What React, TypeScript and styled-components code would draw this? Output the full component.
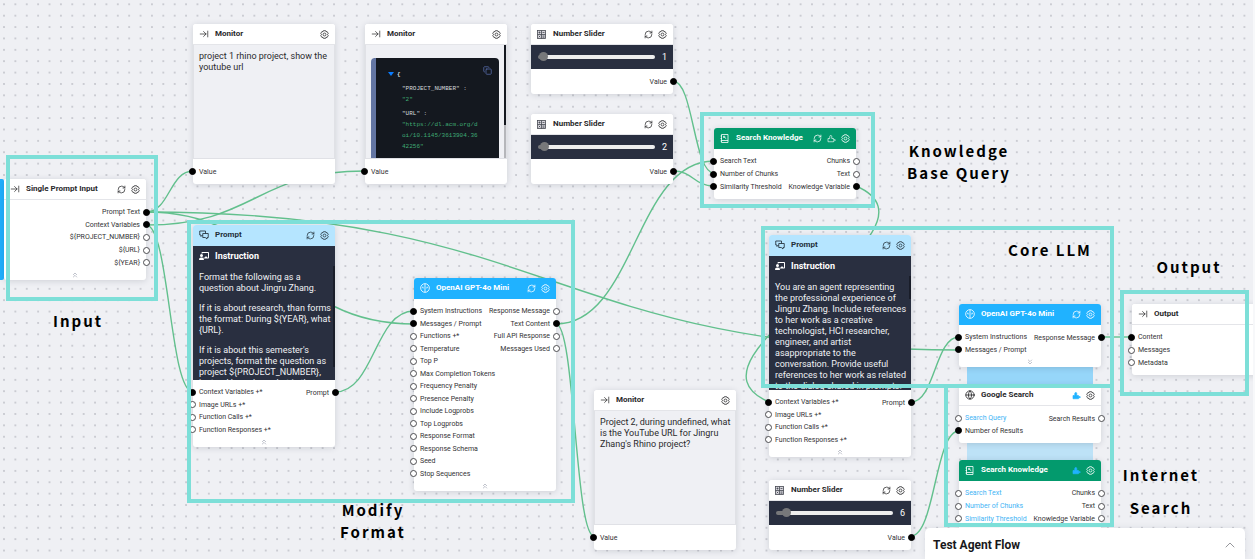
import React from 'react';
import styled, { createGlobalStyle } from 'styled-components';
import { FaChalkboardUser } from 'react-icons/fa6';
import { ArrowRightToLine, ChevronUp, ChevronsDown, ChevronsUp, Copy, Globe, RefreshCw } from 'lucide-react';

const GlobalStyle = createGlobalStyle`
  *, *::before, *::after { box-sizing: border-box; }
  body { margin: 0; background: #f7f8fa; font-family: Roboto, "Liberation Sans", sans-serif; color: #2a2a2c; }
  ul { list-style: none; margin: 0; padding: 0; }
  p, h1, h2, h3 { margin: 0; }
  button { border: 0; padding: 0; background: none; color: inherit; font: inherit; cursor: pointer; }
`;

const Canvas = styled.main`
  position: relative;
  min-height: 100vh;
  margin-right: 2px;
  overflow: hidden;
  background: #eff0f4;
`;

const Layer = styled.svg`
  position: absolute;
  inset: 0;
  width: 100%;
  height: 100%;
`;

const Place = styled.div<{ $x: number; $y: number; $w?: number; $h?: number }>`
  position: absolute;
  left: ${(p) => p.$x}px;
  top: ${(p) => p.$y}px;
  width: ${(p) => p.$w ?? 142}px;
  ${(p) => (p.$h ? `height: ${p.$h}px;` : '')}
`;

const NodeCard = styled(Place)`
  background: #fff;
  border-radius: 3px;
  box-shadow: 0 1px 6px rgba(40, 45, 65, 0.16);
`;

const Frame = styled(Place)`
  border: 4px solid #7ddfd8;
`;

const Caption = styled(Place)`
  font: 700 15px/22px "Noto Sans CJK SC", "Noto Sans", sans-serif;
  letter-spacing: 2px;
  color: #000;
  text-align: center;
  white-space: nowrap;
`;

const ToolLink = styled(Place)<{ $color: string }>`
  background: ${(p) => p.$color};
`;

const AccentBar = styled(Place)`
  background: #1fb0ff;
  border-radius: 0 2px 2px 0;
`;

type Tone = 'white' | 'sky' | 'blue' | 'green';
const tones: Record<Tone, [string, string, string]> = {
  white: ['#fff', '#29292b', '#e4e5e9'],
  sky: ['#b5e5ff', '#23303a', '#b5e5ff'],
  blue: ['#20b2ff', '#fff', '#20b2ff'],
  green: ['#039a6d', '#fff', '#039a6d'],
};

const Header = styled.header<{ $tone: Tone }>`
  display: flex;
  align-items: center;
  height: 21px;
  padding: 0 6px 0 6px;
  border-radius: 3px 3px 0 0;
  background: ${(p) => tones[p.$tone][0]};
  color: ${(p) => tones[p.$tone][1]};
  border-bottom: 1px solid ${(p) => tones[p.$tone][2]};
`;

const Glyph = styled.span`
  display: flex;
  width: 16px;
`;

const Title = styled.h2`
  flex: 1;
  font-size: 8px;
  line-height: 12px;
  font-weight: 700;
  white-space: nowrap;
`;

const Tools = styled.div`
  display: flex;
  gap: 5px;
`;

const Tool = styled.button<{ $color?: string }>`
  display: flex;
  color: ${(p) => p.$color ?? 'inherit'};
`;

const Ports = styled.div<{ $more?: boolean }>`
  display: flex;
  justify-content: space-between;
  padding: 6px 0 ${(p) => (p.$more ? 0 : 6)}px;
`;

const PortList = styled.ul<{ $h: number; $out: boolean }>`
  display: flex;
  flex-direction: column;
  flex-shrink: ${(p) => (p.$out ? 0 : 1)};
  min-width: 0;
  height: ${(p) => p.$h}px;
  margin: ${(p) => (p.$out ? '0 -4px 0 0' : '0 0 0 -4px')};
`;

const PortRow = styled.li<{ $out?: boolean; $blue?: boolean }>`
  flex: 1;
  display: flex;
  flex-direction: ${(p) => (p.$out ? 'row-reverse' : 'row')};
  align-items: center;
  gap: 3px;
  font-size: 7px;
  line-height: 12px;
  white-space: nowrap;
  color: ${(p) => (p.$blue ? '#43b4f5' : '#333335')};
`;

const Dot = styled.span<{ $on?: boolean }>`
  flex: none;
  width: 7px;
  height: 7px;
  border-radius: 50%;
  border: 1px solid ${(p) => (p.$on ? '#000' : '#4c4c50')};
  background: ${(p) => (p.$on ? '#000' : '#fff')};
`;

const Expand = styled.button`
  display: flex;
  align-items: center;
  justify-content: center;
  width: 100%;
  height: 11px;
  color: #a0a5b2;
`;

const Output = styled.div`
  height: 114px;
  padding: 6px 5px;
  overflow: hidden;
  position: relative;
  background: #eff0f4;
  border: solid #e0e1e6;
  border-width: 0 1px 1px;
  font-size: 9px;
  line-height: 11px;
  white-space: nowrap;
`;

const Code = styled.pre`
  position: relative;
  height: 120px;
  margin: 7px 2px 0 0;
  padding: 11px 8px 0 26px;
  border-left: 5px solid #6476a3;
  border-radius: 4px;
  background: #14181f;
  color: #d5d8dc;
  font: 6px/11px "Liberation Mono", monospace;
  em { font-style: normal; color: #3fa974; }
  b { margin-left: -5px; }
  p { padding-bottom: 3px; }
`;

const Caret = styled.i`
  position: absolute;
  left: 12px;
  top: 14px;
  border: 3px solid transparent;
  border-top: 4px solid #0a7cff;
`;

const CopyButton = styled.button`
  position: absolute;
  right: 7px;
  top: 8px;
  color: #5a6fae;
`;

const Thumb = styled.span<{ $y: number; $h: number; $c: string }>`
  position: absolute;
  right: 0;
  top: ${(p) => p.$y}px;
  width: 2px;
  height: ${(p) => p.$h}px;
  background: ${(p) => p.$c};
`;

const Instruction = styled.section`
  position: relative;
  height: 134px;
  padding: 4px 5px 0 6px;
  overflow: hidden;
  background: #292f40;
  color: #fff;
  font-size: 9px;
  line-height: 11px;
  p { margin-bottom: 9px; color: #f0f1f4; white-space: pre; }
`;

const InstructionTitle = styled.h3`
  display: flex;
  align-items: center;
  gap: 6px;
  margin-bottom: 10px;
  font-size: 9px;
  line-height: 12px;
  font-weight: 700;
`;

const SliderBand = styled.label`
  display: flex;
  align-items: center;
  gap: 4px;
  height: 24px;
  padding: 0 6px 0 7px;
  background: #292f40;
  color: #fff;
  font-size: 9px;
  line-height: 12px;
`;

const Range = styled.input`
  flex: 1;
  min-width: 0;
  height: 9px;
  margin: 0;
  appearance: none;
  background: transparent;
  &::-webkit-slider-runnable-track { height: 4px; border-radius: 2px; background: linear-gradient(90deg, #77787a 0 7px, #eeeeee 7px); }
  &::-webkit-slider-thumb { appearance: none; width: 9px; height: 9px; margin-top: -3px; border-radius: 50%; background: #77787a; }
`;

const Value = styled.output`
  width: 8px;
  text-align: right;
`;

const TestPanel = styled.section`
  position: absolute;
  right: 8px;
  bottom: 0;
  display: flex;
  align-items: center;
  justify-content: space-between;
  width: 320px;
  height: 31px;
  padding: 2px 7px 0 8px;
  background: #fff;
  border-radius: 5px 5px 0 0;
  box-shadow: 0 0 6px rgba(40, 45, 65, 0.1);
  h2 { font-size: 12px; line-height: 16px; font-weight: 700; color: #18181b; }
  button { display: flex; color: #96979c; }
`;

const CalcIcon = () => (
  <svg width="9" height="9" viewBox="0 0 18 18" fill="none" stroke="#454952" strokeWidth="1.6">
    <rect x="1" y="1" width="16" height="16" fill="#d9d7de" />
    <path d="M9 1v16M1 9h16M3 5h4M5 3v4M11 5h4M3.5 11.5l3 3M6.5 11.5l-3 3M11 12h4M11 14.5h4" />
  </svg>
);
const BrainIcon = () => (
  <svg width="10" height="10" viewBox="0 0 18 18" fill="none" stroke="currentColor" strokeWidth="1.5">
    <circle cx="9" cy="9" r="7.8" />
    <path d="M9 1.500v15M5 6.500v2.500h1.500M13 6.500v2.500h-1.500" />
  </svg>
);
const ChatIcon = () => (
  <svg width="10" height="10" viewBox="0 0 20 20" fill="none" stroke="currentColor" strokeWidth="1.7" strokeLinejoin="round">
    <path d="M13 7V2H1.500v8H4v3l3-3" />
    <path d="M7.500 7H18.500v8H16v3l-3.500-3h-5z" />
  </svg>
);
const KnowledgeIcon = () => (
  <svg width="9" height="9" viewBox="0 0 18 18" fill="none" stroke="currentColor" strokeWidth="1.600">
    <path d="M3 1h13v16H3zM1 4h3M1 9h3M1 14h3M3 13h13" />
    <path d="M7 4.500h2.500v2.500H7zM9.500 7l3 2.500" />
  </svg>
);
const GearIcon = () => (
  <svg width="9" height="9" viewBox="0 0 20 20" fill="none" stroke="currentColor" strokeWidth="1.700" strokeLinejoin="round">
    <path d="M7.500 1.500h5l.8 2.400 2.400-.500 2.600 4.300L16.700 10l1.600 2.300-2.600 4.300-2.400-.500-.8 2.400h-5l-.8-2.400-2.400.500-2.600-4.300L3.300 10 1.700 7.700l2.600-4.300 2.400.500z" />
    <circle cx="10" cy="10" r="3.200" />
  </svg>
);
const PlugIcon = ({ filled }: { filled?: boolean }) => (
  <svg width="9" height="9" viewBox="0 0 18 18" fill={filled ? 'currentColor' : 'none'} stroke="currentColor" strokeWidth="1.300" strokeLinejoin="round">
    <path d="M2 15.500V9h3.500V5a2 2 0 0 1 4 0v4H13v2h2.500a1.200 1.200 0 0 1 0 2.400H13v2.100z" />
  </svg>
);
const icons = {
  arrow: <ArrowRightToLine size={10} strokeWidth={1.75} />,
  calc: <CalcIcon />,
  chat: <ChatIcon />,
  brain: <BrainIcon />,
  book: <KnowledgeIcon />,
  globe: <Globe size={10} strokeWidth={2} />,
};

type NodeProps = {
  x: number; y: number; title: string; icon: keyof typeof icons; tone?: Tone;
  refresh?: boolean; plug?: 'on' | 'off'; settings?: boolean;
  ins?: string[]; outs?: string[]; on?: string[]; linked?: string[];
  more?: 'up' | 'down'; children?: React.ReactNode;
};

function FlowNode({ x, y, title, icon, tone = 'white', refresh, plug, settings = true, ins = [], outs = [], on = [], linked = [], more, children }: NodeProps) {
  const column = (names: string[], out: boolean) => (
    <PortList $h={Math.round(names.length * 12.5)} $out={out}>
      {names.map((n) => (
        <PortRow key={n} $out={out} $blue={linked.includes(n)}>
          <Dot $on={on.includes(n)} />
          <span>{n}</span>
        </PortRow>
      ))}
    </PortList>
  );
  return (
    <NodeCard as="article" $x={x} $y={y}>
      <Header $tone={tone}>
        <Glyph>{icons[icon]}</Glyph>
        <Title>{title}</Title>
        <Tools>
          {refresh && <Tool aria-label="Refresh"><RefreshCw size={9} strokeWidth={2} /></Tool>}
          {plug && <Tool aria-label="Tool link" $color={plug === 'on' ? '#20b2ff' : undefined}><PlugIcon filled={plug === 'on'} /></Tool>}
          {settings && <Tool aria-label="Settings"><GearIcon /></Tool>}
        </Tools>
      </Header>
      {children}
      <Ports $more={!!more}>
        {column(ins, false)}
        {column(outs, true)}
      </Ports>
      {more && (
        <Expand aria-label={more === 'up' ? 'Collapse' : 'Expand'}>
          {more === 'up' ? <ChevronsUp size={8} /> : <ChevronsDown size={8} />}
        </Expand>
      )}
    </NodeCard>
  );
}

function Slider({ x, y, value }: { x: number; y: number; value: number }) {
  return (
    <FlowNode x={x} y={y} title="Number Slider" icon="calc" refresh outs={['Value']} on={['Value']}>
      <SliderBand>
        <Range type="range" min={0} max={100} defaultValue={value} aria-label="Number" />
        <Value>{value}</Value>
      </SliderBand>
    </FlowNode>
  );
}

const promptIns = ['Context Variables +*', 'Image URLs +*', 'Function Calls +*', 'Function Responses +*'];

function Prompt({ x, y, paragraphs, thumb }: { x: number; y: number; paragraphs: string[]; thumb: number }) {
  return (
    <FlowNode x={x} y={y} title="Prompt" icon="chat" tone="sky" refresh ins={promptIns} outs={['Prompt']} on={['Context Variables +*', 'Prompt']} more="up">
      <Instruction>
        <InstructionTitle><FaChalkboardUser size={10} />Instruction</InstructionTitle>
        {paragraphs.map((t) => <p key={t}>{t}</p>)}
        <Thumb $y={20} $h={thumb} $c="#191d29" />
      </Instruction>
    </FlowNode>
  );
}

const wire = (x1: number, y1: number, x2: number, y2: number) => {
  const m = (x1 + x2) / 2;
  return `M${x1} ${y1}C${m} ${y1} ${m} ${y2} ${x2} ${y2}`;
};
const wires = [
  wire(146, 212, 193, 171),
  wire(146, 212, 414, 324),
  wire(146, 212, 959, 350),
  wire(146, 225, 365, 171),
  wire(146, 225, 193, 392),
  wire(335, 392, 414, 311),
  wire(556, 324, 714, 161),
  wire(556, 324, 594, 536),
  wire(673, 81, 714, 173),
  wire(673, 171, 714, 186),
  wire(911, 402, 959, 337),
  wire(1101, 337, 1132, 337),
  wire(911, 536, 959, 431),
  'M856 186C961 231 664 357 769 402',
];

export default function App() {
  return (
    <>
      <GlobalStyle />
      <Canvas>
        <Layer aria-hidden="true">
          <defs>
            <pattern id="dots" x="-1.700" y="-1.400" width="11.380" height="11.380" patternUnits="userSpaceOnUse">
              <circle cx="5.700" cy="5.700" r="0.850" fill="#b9bac2" />
            </pattern>
          </defs>
          <rect width="100%" height="100%" fill="url(#dots)" />
          <g fill="none" stroke="#62c08d" strokeWidth="1.400">
            {wires.map((d) => <path key={d} d={d} />)}
          </g>
        </Layer>

        <AccentBar $x={0} $y={179} $w={4} $h={101} />
        <ToolLink $x={967} $y={360} $w={126} $h={30} $color="#96d6f9" />
        <ToolLink $x={967} $y={440} $w={126} $h={24} $color="#bde2f7" />

        <FlowNode x={4} y={179} title="Single Prompt Input" icon="arrow" refresh more="up"
          outs={['Prompt Text', 'Context Variables', '${PROJECT_NUMBER}', '${URL}', '${YEAR}']} on={['Prompt Text', 'Context Variables']} />

        <FlowNode x={193} y={24} title="Monitor" icon="arrow" ins={['Value']} on={['Value']}>
          <Output>project 1 rhino project, show the<br />youtube url</Output>
        </FlowNode>

        <FlowNode x={365} y={24} title="Monitor" icon="arrow" ins={['Value']} on={['Value']}>
          <Output>
            <Code>
              <Caret />
              <CopyButton aria-label="Copy"><Copy size={9} /></CopyButton>
              <p><b>{'{'}</b></p>
              <p>"PROJECT_NUMBER" :<br /><em>"2"</em></p>
              <p>"URL" :<br /><em>"https://dl.acm.org/d<br />oi/10.1145/3613904.36<br />42256"</em></p>
              <p>"YEAR" : <em>"2024"</em></p>
            </Code>
            <Thumb $y={0} $h={114} $c="#b5b6ba" />
            <Thumb $y={0} $h={80} $c="#14181f" />
          </Output>
        </FlowNode>

        <Slider x={531} y={24} value={1} />
        <Slider x={531} y={114} value={2} />

        <FlowNode x={714} y={128} title="Search Knowledge" icon="book" tone="green" refresh plug="off"
          ins={['Search Text', 'Number of Chunks', 'Similarity Threshold']} outs={['Chunks', 'Text', 'Knowledge Variable']}
          on={['Search Text', 'Number of Chunks', 'Similarity Threshold', 'Knowledge Variable']} />

        <Prompt x={193} y={225} thumb={101} paragraphs={[
          'Format the following as a\nquestion about Jingru Zhang.',
          'If it is about research, than forms\nthe format: During ${YEAR}, what\n{URL}.',
          "If it is about this semester's\nprojects, format the question as\nproject ${PROJECT_NUMBER},\ninstead based on what is the",
        ]} />

        <FlowNode x={414} y={278} title="OpenAI GPT-4o Mini" icon="brain" tone="blue" refresh more="up"
          ins={['System Instructions', 'Messages / Prompt', 'Functions +*', 'Temperature', 'Top P', 'Max Completion Tokens', 'Frequency Penalty', 'Presence Penalty', 'Include Logprobs', 'Top Logprobs', 'Response Format', 'Response Schema', 'Seed', 'Stop Sequences']}
          outs={['Response Message', 'Text Content', 'Full API Response', 'Messages Used']}
          on={['System Instructions', 'Messages / Prompt', 'Text Content']} />

        <FlowNode x={594} y={390} title="Monitor" icon="arrow" ins={['Value']} on={['Value']}>
          <Output>Project 2, during undefined, what<br />is the YouTube URL for Jingru<br />Zhang's Rhino project?</Output>
        </FlowNode>

        <Prompt x={769} y={235} thumb={23} paragraphs={[
          'You are an agent representing\nthe professional experience of\nJingru Zhang. Include references\nto her work as a creative\ntechnologist, HCI researcher,\nengineer, and artist\nasappropriate to the\nconversation. Provide useful\nreferences to her work as related\nto the dialog shared in prompts.',
        ]} />

        <Slider x={769} y={480} value={6} />

        <FlowNode x={959} y={304} title="OpenAI GPT-4o Mini" icon="brain" tone="blue" refresh more="down"
          ins={['System Instructions', 'Messages / Prompt']} outs={['Response Message']}
          on={['System Instructions', 'Messages / Prompt', 'Response Message']} />

        <FlowNode x={959} y={385} title="Google Search" icon="globe" plug="on"
          ins={['Search Query', 'Number of Results']} outs={['Search Results']} on={['Number of Results']} linked={['Search Query']} />

        <FlowNode x={959} y={460} title="Search Knowledge" icon="book" tone="green" plug="on"
          ins={['Search Text', 'Number of Chunks', 'Similarity Threshold']} outs={['Chunks', 'Text', 'Knowledge Variable']}
          linked={['Search Text', 'Number of Chunks', 'Similarity Threshold']} />

        <FlowNode x={1132} y={304} title="Output" icon="arrow" settings={false}
          ins={['Content', 'Messages', 'Metadata']} on={['Content']} />

        <TestPanel>
          <h2>Test Agent Flow</h2>
          <button aria-label="Open test panel"><ChevronUp size={16} strokeWidth={1.5} /></button>
        </TestPanel>

        <Frame $x={6} $y={155} $w={152} $h={146} />
        <Frame $x={700} $y={112} $w={175} $h={96} />
        <Frame $x={187} $y={220} $w={388} $h={283} />
        <Frame $x={761} $y={226} $w={353} $h={162} />
        <Frame $x={944} $y={384} $w={170} $h={143} />
        <Frame $x={1120} $y={290} $w={129} $h={106} />

        <Caption $x={7} $y={310}>Input</Caption>
        <Caption $x={302} $y={499}>Modify<br />Format</Caption>
        <Caption $x={888} $y={140}>Knowledge<br />Base Query</Caption>
        <Caption $x={979} $y={239}>Core LLM</Caption>
        <Caption $x={1118} $y={256}>Output</Caption>
        <Caption $x={1090} $y={464}>Internet</Caption>
        <Caption $x={1090} $y={497}>Search</Caption>
      </Canvas>
    </>
  );
}
